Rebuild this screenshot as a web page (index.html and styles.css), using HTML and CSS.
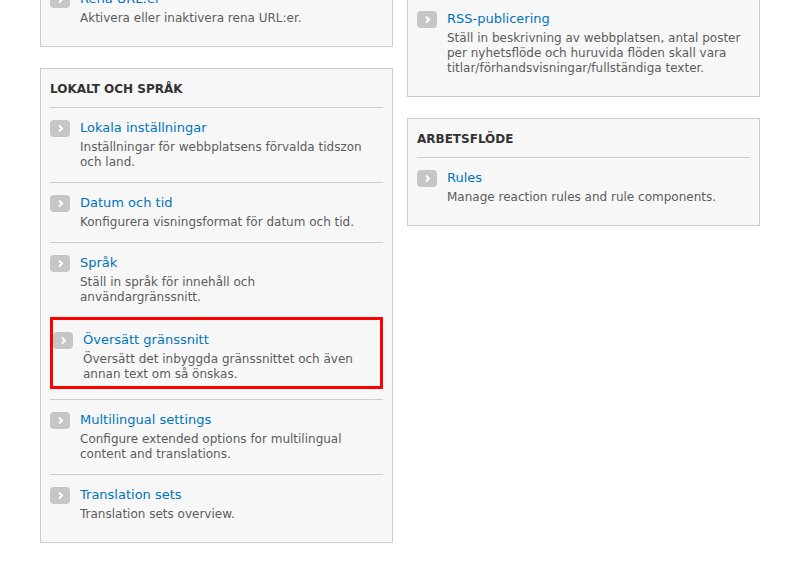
FILE: index.html
```html
<!DOCTYPE html>
<html lang="sv">
<head>
<meta charset="utf-8">
<title>Konfiguration</title>
<link rel="stylesheet" href="styles.css">
</head>
<body>
<div class="page">
  <div class="col col-left">
    <div class="panel">
      <ul class="admin-list">
        <li class="item">
          <span class="arrow"><svg width="20" height="17" viewBox="0 0 20 17"><rect width="20" height="17" rx="4" fill="#c6c6c6"/><polyline points="9,5.5 12,8.5 9,11.5" fill="none" stroke="#fff" stroke-width="2"/></svg></span>
          <div class="text"><a class="title" href="#">Rena URL:er</a><div class="desc">Aktivera eller inaktivera rena URL:er.</div></div>
        </li>
      </ul>
    </div>
    <div class="panel">
      <h3 class="panel-title">Lokalt och språk</h3>
      <ul class="admin-list">
        <li class="item">
          <span class="arrow"><svg width="20" height="17" viewBox="0 0 20 17"><rect width="20" height="17" rx="4" fill="#c6c6c6"/><polyline points="9,5.5 12,8.5 9,11.5" fill="none" stroke="#fff" stroke-width="2"/></svg></span>
          <div class="text"><a class="title" href="#">Lokala inställningar</a><div class="desc">Inställningar för webbplatsens förvalda tidszon och land.</div></div>
        </li>
        <li class="item sep">
          <span class="arrow"><svg width="20" height="17" viewBox="0 0 20 17"><rect width="20" height="17" rx="4" fill="#c6c6c6"/><polyline points="9,5.5 12,8.5 9,11.5" fill="none" stroke="#fff" stroke-width="2"/></svg></span>
          <div class="text"><a class="title" href="#">Datum och tid</a><div class="desc">Konfigurera visningsformat för datum och tid.</div></div>
        </li>
        <li class="item sep">
          <span class="arrow"><svg width="20" height="17" viewBox="0 0 20 17"><rect width="20" height="17" rx="4" fill="#c6c6c6"/><polyline points="9,5.5 12,8.5 9,11.5" fill="none" stroke="#fff" stroke-width="2"/></svg></span>
          <div class="text"><a class="title" href="#">Språk</a><div class="desc">Ställ in språk för innehåll och<br>användargränssnitt.</div></div>
        </li>
        <li class="item highlight">
          <span class="arrow"><svg width="20" height="17" viewBox="0 0 20 17"><rect width="20" height="17" rx="4" fill="#c6c6c6"/><polyline points="9,5.5 12,8.5 9,11.5" fill="none" stroke="#fff" stroke-width="2"/></svg></span>
          <div class="text"><a class="title" href="#">Översätt gränssnitt</a><div class="desc">Översätt det inbyggda gränssnittet och även annan text om så önskas.</div></div>
        </li>
        <li class="item sep">
          <span class="arrow"><svg width="20" height="17" viewBox="0 0 20 17"><rect width="20" height="17" rx="4" fill="#c6c6c6"/><polyline points="9,5.5 12,8.5 9,11.5" fill="none" stroke="#fff" stroke-width="2"/></svg></span>
          <div class="text"><a class="title" href="#">Multilingual settings</a><div class="desc">Configure extended options for multilingual content and translations.</div></div>
        </li>
        <li class="item sep">
          <span class="arrow"><svg width="20" height="17" viewBox="0 0 20 17"><rect width="20" height="17" rx="4" fill="#c6c6c6"/><polyline points="9,5.5 12,8.5 9,11.5" fill="none" stroke="#fff" stroke-width="2"/></svg></span>
          <div class="text"><a class="title" href="#">Translation sets</a><div class="desc">Translation sets overview.</div></div>
        </li>
      </ul>
    </div>
  </div>
  <div class="col col-right">
    <div class="panel">
      <ul class="admin-list">
        <li class="item">
          <span class="arrow"><svg width="20" height="17" viewBox="0 0 20 17"><rect width="20" height="17" rx="4" fill="#c6c6c6"/><polyline points="9,5.5 12,8.5 9,11.5" fill="none" stroke="#fff" stroke-width="2"/></svg></span>
          <div class="text"><a class="title" href="#">RSS-publicering</a><div class="desc">Ställ in beskrivning av webbplatsen, antal poster per nyhetsflöde och huruvida flöden skall vara titlar/förhandsvisningar/fullständiga texter.</div></div>
        </li>
      </ul>
    </div>
    <div class="panel">
      <h3 class="panel-title">Arbetsflöde</h3>
      <ul class="admin-list">
        <li class="item">
          <span class="arrow"><svg width="20" height="17" viewBox="0 0 20 17"><rect width="20" height="17" rx="4" fill="#c6c6c6"/><polyline points="9,5.5 12,8.5 9,11.5" fill="none" stroke="#fff" stroke-width="2"/></svg></span>
          <div class="text"><a class="title" href="#">Rules</a><div class="desc">Manage reaction rules and rule components.</div></div>
        </li>
      </ul>
    </div>
  </div>
</div>
</body>
</html>
```

FILE: styles.css
```css
html, body {
  margin: 0;
  padding: 0;
  background: #fff;
}
body {
  font-family: "DejaVu Sans", "Noto Sans", sans-serif;
  color: #333;
}
.page {
  display: flex;
  align-items: flex-start;
  gap: 14px;
  padding: 0 40px;
  margin-top: -22px;
}
.col {
  width: 353px;
  display: flex;
  flex-direction: column;
  gap: 21px;
}
.col-right {
  margin-top: 20px;
}
.panel {
  border: 1px solid #ccc;
  background: #f7f7f7;
  padding: 0 9px 8px;
}
.panel-title {
  margin: 0;
  padding: 12px 0 10px;
  font-size: 12px;
  line-height: 16px;
  font-weight: bold;
  text-transform: uppercase;
  color: #333;
  border-bottom: 1px solid #ccc;
}
.admin-list {
  list-style: none;
  margin: 0;
  padding: 0;
}
.item {
  display: flex;
  padding: 10px 0 12px;
}
.item.sep {
  border-top: 1px solid #ccc;
}
.item.highlight {
  border: 3px solid #f00;
  padding: 10px 0 4px;
  margin-bottom: 10px;
}
.arrow {
  flex: 0 0 30px;
  padding-top: 2px;
  height: 17px;
}
.arrow svg {
  display: block;
}
.text {
  flex: 1;
}
.title {
  display: block;
  font-size: 13px;
  line-height: 19px;
  color: #0074bd;
  text-decoration: none;
}
.desc {
  margin-top: 3px;
  font-size: 12px;
  line-height: 15px;
  color: #5c5c5c;
}
```
